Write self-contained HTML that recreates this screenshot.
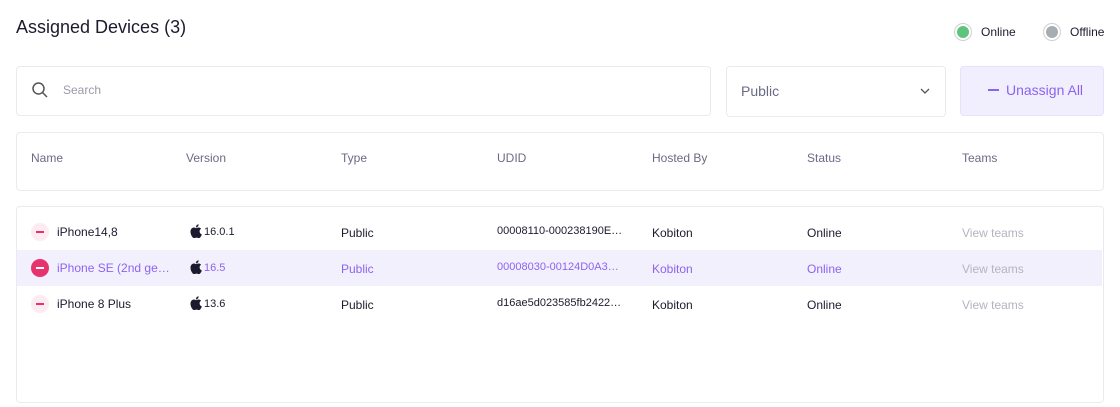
<!DOCTYPE html>
<html><head><style>
*{box-sizing:border-box;margin:0;padding:0}
body{width:1120px;height:407px;background:#fff;font-family:"Liberation Sans",sans-serif;position:relative;overflow:hidden;color:#1c1b2e}
.a{position:absolute}
.box{position:absolute;border:1px solid #ebebef;border-radius:4px;background:#fff}
.h{font-size:12px;color:#6b6a86;top:151px}
.c{font-size:12px;white-space:nowrap}
.row{position:absolute;left:17px;width:1085px;height:36px}
.min{position:absolute;left:14px;top:9px;width:18px;height:18px;border-radius:50%;background:#fdebf2}
.min:after{content:"";position:absolute;left:5px;top:8px;width:8px;height:2px;background:#e8326e}
.min.on{background:#e8326e}
.min.on:after{background:#fff}
.dot{position:absolute;width:18px;height:18px;border-radius:50%;border:1px solid #cfd0d6;background:#fff}
.dot i{position:absolute;left:2px;top:2px;width:12px;height:12px;border-radius:50%}
.ap{position:absolute;left:173px;top:10px}
</style></head><body>
<div class="a" style="left:16px;top:17px;font-size:18px;color:#1c1b2e">Assigned Devices (3)</div>
<div class="dot" style="left:954px;top:23px"><i style="background:#5ec47c"></i></div>
<div class="a c" style="left:981px;top:25px;font-size:12px">Online</div>
<div class="dot" style="left:1043px;top:23px"><i style="background:#a8adb3"></i></div>
<div class="a c" style="left:1070px;top:25px;font-size:12px">Offline</div>

<div class="box" style="left:16px;top:66px;width:695px;height:50px"></div>
<svg class="a" style="left:31px;top:81px" width="18" height="18" viewBox="0 0 18 18"><circle cx="7.5" cy="7.5" r="5.5" fill="none" stroke="#555" stroke-width="1.5"/><line x1="11.5" y1="11.5" x2="16" y2="16" stroke="#555" stroke-width="1.5"/></svg>
<div class="a" style="left:63px;top:83px;font-size:12px;color:#9a9aa8">Search</div>

<div class="box" style="left:726px;top:66px;width:220px;height:51px"></div>
<div class="a" style="left:741px;top:83px;font-size:14px;color:#6b6a86">Public</div>
<svg class="a" style="left:920px;top:88px" width="10" height="7" viewBox="0 0 10 7"><path d="M1 1l4 4 4-4" fill="none" stroke="#555" stroke-width="1.3"/></svg>

<div class="a" style="left:960px;top:66px;width:144px;height:50px;background:#f1effd;border:1px solid #e6e2fb;border-radius:4px"></div>
<div class="a" style="left:988px;top:89px;width:11px;height:2px;background:#8c63f0"></div>
<div class="a c" style="left:1006px;top:82px;font-size:14px;color:#8c63f0">Unassign All</div>

<div class="box" style="left:16px;top:132px;width:1088px;height:59px"></div>
<div class="a h" style="left:31px">Name</div>
<div class="a h" style="left:186px">Version</div>
<div class="a h" style="left:341px">Type</div>
<div class="a h" style="left:497px">UDID</div>
<div class="a h" style="left:652px">Hosted By</div>
<div class="a h" style="left:807px">Status</div>
<div class="a h" style="left:962px">Teams</div>

<div class="box" style="left:16px;top:206px;width:1088px;height:197px"></div>

<div class="row" style="top:214px">
<div class="min"></div>
<div class="a c" style="left:40px;top:11px">iPhone14,8</div>
<svg class="ap" width="12" height="14" viewBox="0 0 12 14"><path d="M9.6 7.4c0-1.7 1.4-2.5 1.5-2.6-.8-1.2-2-1.3-2.5-1.3-1-.1-2 .6-2.5.6s-1.3-.6-2.2-.6C2.8 3.5 1.7 4.2 1.1 5.3-.2 7.5.8 10.8 2 12.5c.6.8 1.3 1.7 2.2 1.7.9 0 1.2-.6 2.3-.6s1.4.6 2.3.6c.9 0 1.5-.9 2.1-1.7.7-1 .9-1.9 1-2-.1 0-2.2-.8-2.3-3.1zM7.9 2.4c.5-.6.8-1.4.7-2.2-.7 0-1.5.5-2 1-.4.5-.8 1.3-.7 2.1.8.1 1.5-.4 2-.9z" fill="#1c1b2e"/></svg>
<div class="a c" style="left:187px;top:12px;font-size:11px">16.0.1</div>
<div class="a c" style="left:324px;top:12px">Public</div>
<div class="a c" style="left:480px;top:11px;font-size:11px">00008110-000238190E…</div>
<div class="a c" style="left:635px;top:12px">Kobiton</div>
<div class="a c" style="left:790px;top:12px">Online</div>
<div class="a c" style="left:945px;top:12px;color:#b4b4c0">View teams</div>
</div>

<div class="row" style="top:250px;background:#f2f0fd;color:#8c63f0">
<div class="min on"></div>
<div class="a c" style="left:40px;top:11px">iPhone SE (2nd ge…</div>
<svg class="ap" width="12" height="14" viewBox="0 0 12 14"><path d="M9.6 7.4c0-1.7 1.4-2.5 1.5-2.6-.8-1.2-2-1.3-2.5-1.3-1-.1-2 .6-2.5.6s-1.3-.6-2.2-.6C2.8 3.5 1.7 4.2 1.1 5.3-.2 7.5.8 10.8 2 12.5c.6.8 1.3 1.7 2.2 1.7.9 0 1.2-.6 2.3-.6s1.4.6 2.3.6c.9 0 1.5-.9 2.1-1.7.7-1 .9-1.9 1-2-.1 0-2.2-.8-2.3-3.1zM7.9 2.4c.5-.6.8-1.4.7-2.2-.7 0-1.5.5-2 1-.4.5-.8 1.3-.7 2.1.8.1 1.5-.4 2-.9z" fill="#1c1b2e"/></svg>
<div class="a c" style="left:187px;top:12px;font-size:11px">16.5</div>
<div class="a c" style="left:324px;top:12px">Public</div>
<div class="a c" style="left:480px;top:11px;font-size:11px">00008030-00124D0A3…</div>
<div class="a c" style="left:635px;top:12px">Kobiton</div>
<div class="a c" style="left:790px;top:12px">Online</div>
<div class="a c" style="left:945px;top:12px;color:#b4b4c0">View teams</div>
</div>

<div class="row" style="top:286px">
<div class="min"></div>
<div class="a c" style="left:40px;top:11px">iPhone 8 Plus</div>
<svg class="ap" width="12" height="14" viewBox="0 0 12 14"><path d="M9.6 7.4c0-1.7 1.4-2.5 1.5-2.6-.8-1.2-2-1.3-2.5-1.3-1-.1-2 .6-2.5.6s-1.3-.6-2.2-.6C2.8 3.5 1.7 4.2 1.1 5.3-.2 7.5.8 10.8 2 12.5c.6.8 1.3 1.7 2.2 1.7.9 0 1.2-.6 2.3-.6s1.4.6 2.3.6c.9 0 1.5-.9 2.1-1.7.7-1 .9-1.9 1-2-.1 0-2.2-.8-2.3-3.1zM7.9 2.4c.5-.6.8-1.4.7-2.2-.7 0-1.5.5-2 1-.4.5-.8 1.3-.7 2.1.8.1 1.5-.4 2-.9z" fill="#1c1b2e"/></svg>
<div class="a c" style="left:187px;top:12px;font-size:11px">13.6</div>
<div class="a c" style="left:324px;top:12px">Public</div>
<div class="a c" style="left:480px;top:11px;font-size:11px">d16ae5d023585fb2422…</div>
<div class="a c" style="left:635px;top:12px">Kobiton</div>
<div class="a c" style="left:790px;top:12px">Online</div>
<div class="a c" style="left:945px;top:12px;color:#b4b4c0">View teams</div>
</div>
</body></html>
